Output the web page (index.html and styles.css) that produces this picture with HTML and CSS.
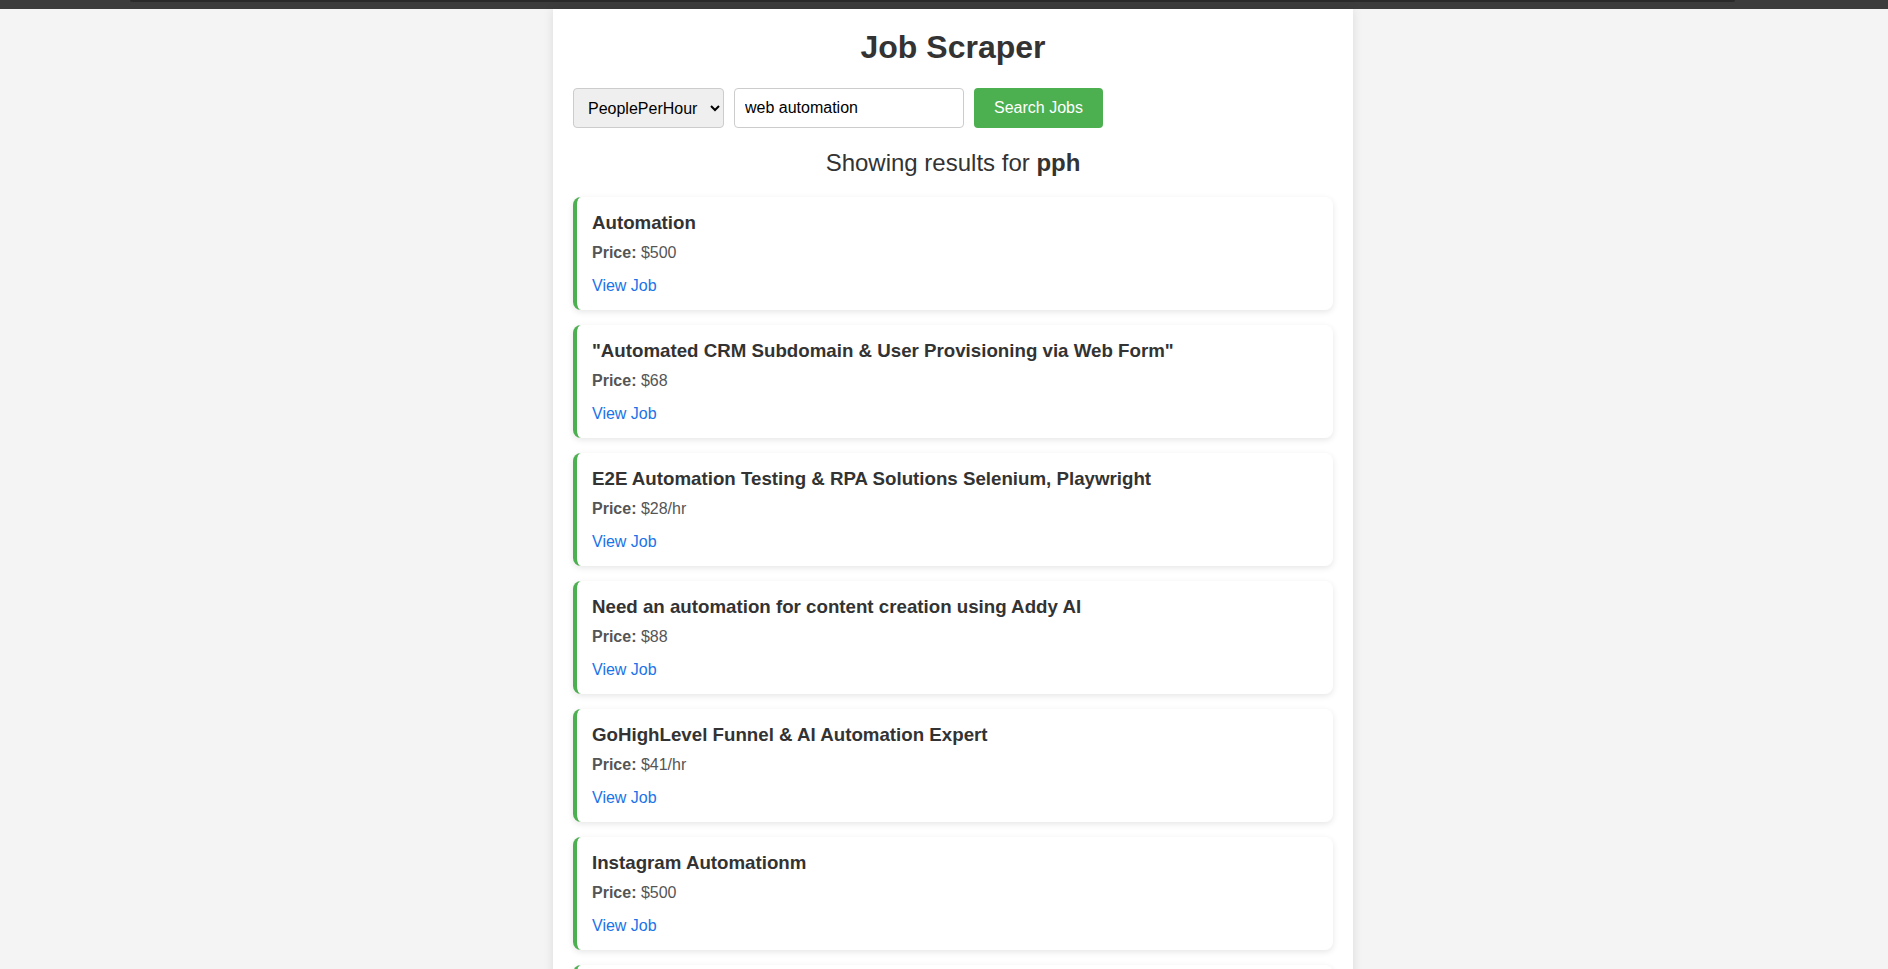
FILE: index.html
```html
<!DOCTYPE html>
<html lang="en">
<head>
<meta charset="utf-8">
<title>Job Scraper</title>
<link rel="stylesheet" href="styles.css">
</head>
<body>
<div class="topbar"><div class="topbar-thumb"></div></div>
<div class="page">
  <main class="container">
    <h1 class="title">Job Scraper</h1>
    <form class="search-form">
      <select class="site-select">
        <option>PeoplePerHour</option>
      </select>
      <input class="query-input" type="text" value="web automation">
      <button class="search-btn" type="button">Search Jobs</button>
    </form>
    <h2 class="results-heading">Showing results for <strong>pph</strong></h2>
    <div class="job-list">
      <div class="job-card">
        <h3 class="job-title">Automation</h3>
        <p class="job-price"><strong>Price:</strong> $500</p>
        <a class="job-link" href="#">View Job</a>
      </div>
      <div class="job-card">
        <h3 class="job-title">"Automated CRM Subdomain &amp; User Provisioning via Web Form"</h3>
        <p class="job-price"><strong>Price:</strong> $68</p>
        <a class="job-link" href="#">View Job</a>
      </div>
      <div class="job-card">
        <h3 class="job-title">E2E Automation Testing &amp; RPA Solutions Selenium, Playwright</h3>
        <p class="job-price"><strong>Price:</strong> $28/hr</p>
        <a class="job-link" href="#">View Job</a>
      </div>
      <div class="job-card">
        <h3 class="job-title">Need an automation for content creation using Addy AI</h3>
        <p class="job-price"><strong>Price:</strong> $88</p>
        <a class="job-link" href="#">View Job</a>
      </div>
      <div class="job-card">
        <h3 class="job-title">GoHighLevel Funnel &amp; AI Automation Expert</h3>
        <p class="job-price"><strong>Price:</strong> $41/hr</p>
        <a class="job-link" href="#">View Job</a>
      </div>
      <div class="job-card">
        <h3 class="job-title">Instagram Automationm</h3>
        <p class="job-price"><strong>Price:</strong> $500</p>
        <a class="job-link" href="#">View Job</a>
      </div>
      <div class="job-card job-card-next"></div>
    </div>
  </main>
</div>
</body>
</html>
```

FILE: styles.css
```css
* { box-sizing: border-box; }

html, body {
  margin: 0;
  padding: 0;
}

body {
  background: #f4f4f4;
  font-family: "Liberation Sans", Arial, sans-serif;
  color: #333;
  overflow: hidden;
}

.topbar {
  height: 9px;
  background: #3c3c3c;
  padding-left: 130px;
}

.topbar-thumb {
  width: 1605px;
  height: 2px;
  background: #2a2a2a;
  border-radius: 0 0 3px 3px;
}

.page {
  padding-left: 18px;
}

.container {
  width: 800px;
  margin: 0 auto;
  background: #fff;
  padding: 20px;
  box-shadow: 0 0 10px rgba(0, 0, 0, 0.1);
  min-height: 1200px;
}

.title {
  font-size: 32px;
  font-weight: bold;
  text-align: center;
  margin: 0 0 22px;
  color: #333;
}

.search-form {
  display: flex;
  gap: 10px;
  margin: 0;
}

.site-select,
.query-input,
.search-btn {
  height: 40px;
  font-family: "Liberation Sans", Arial, sans-serif;
  font-size: 16px;
  border-radius: 4px;
}

.site-select {
  width: 151px;
  padding: 0 6px 0 10px;
  background-color: #efefef;
  border: 1px solid #ccc;
  color: #000;
}

.query-input {
  width: 230px;
  padding: 0 10px;
  border: 1px solid #ccc;
  background: #fff;
  color: #000;
}

.search-btn {
  padding: 0 20px;
  white-space: nowrap;
  flex: none;
  border: none;
  background: #4caf50;
  color: #fff;
  cursor: pointer;
}

.results-heading {
  font-size: 24px;
  font-weight: normal;
  text-align: center;
  margin: 21px 0 20px;
  color: #333;
}

.results-heading strong {
  font-weight: bold;
}

.job-card {
  background: #fff;
  border-left: 4px solid #4caf50;
  border-radius: 8px;
  box-shadow: 0 2px 6px rgba(0, 0, 0, 0.1);
  padding: 15px;
  margin-bottom: 15px;
  height: 113px;
}

.job-title {
  font-size: 18.72px;
  font-weight: bold;
  margin: 0 0 10px;
  color: #333;
}

.job-price {
  font-size: 16px;
  color: #555;
  margin: 0 0 15px;
}

.job-link {
  display: block;
  font-size: 16px;
  color: #1a73e8;
  text-decoration: none;
}
```
